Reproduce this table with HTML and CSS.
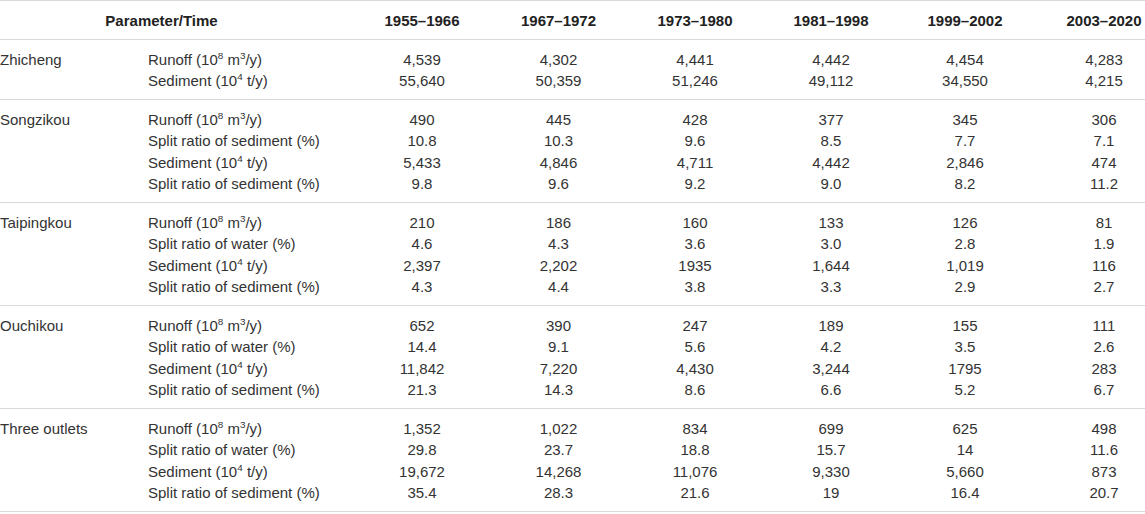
FILE: index.html
```html
<!DOCTYPE html>
<html lang="en">
<head>
    <meta charset="UTF-8">
    <meta name="viewport" content="width=device-width, initial-scale=1.0">
    <title>Runoff and sediment of the three outlets</title>
    <link rel="stylesheet" href="styles.css">
</head>
<body>
    <table class="data-table">
        <colgroup>
            <col class="col-station">
            <col class="col-param">
            <col class="col-a">
            <col class="col-b">
            <col class="col-c">
            <col class="col-d">
            <col class="col-e">
            <col class="col-f">
        </colgroup>
        <thead>
            <tr>
                <th colspan="2" class="param-head">Parameter/Time</th>
                <th>1955–1966</th>
                <th>1967–1972</th>
                <th>1973–1980</th>
                <th>1981–1998</th>
                <th>1999–2002</th>
                <th class="last">2003–2020</th>
            </tr>
        </thead>
        <tbody>
            <tr>
                <td class="station">Zhicheng</td>
                <td class="param">Runoff (10<sup>8</sup> m<sup>3</sup>/y)<br>Sediment (10<sup>4</sup> t/y)</td>
                <td>4,539<br>55,640</td>
                <td>4,302<br>50,359</td>
                <td>4,441<br>51,246</td>
                <td>4,442<br>49,112</td>
                <td>4,454<br>34,550</td>
                <td class="last">4,283<br>4,215</td>
            </tr>
            <tr>
                <td class="station">Songzikou</td>
                <td class="param">Runoff (10<sup>8</sup> m<sup>3</sup>/y)<br>Split ratio of sediment (%)<br>Sediment (10<sup>4</sup> t/y)<br>Split ratio of sediment (%)</td>
                <td>490<br>10.8<br>5,433<br>9.8</td>
                <td>445<br>10.3<br>4,846<br>9.6</td>
                <td>428<br>9.6<br>4,711<br>9.2</td>
                <td>377<br>8.5<br>4,442<br>9.0</td>
                <td>345<br>7.7<br>2,846<br>8.2</td>
                <td class="last">306<br>7.1<br>474<br>11.2</td>
            </tr>
            <tr>
                <td class="station">Taipingkou</td>
                <td class="param">Runoff (10<sup>8</sup> m<sup>3</sup>/y)<br>Split ratio of water (%)<br>Sediment (10<sup>4</sup> t/y)<br>Split ratio of sediment (%)</td>
                <td>210<br>4.6<br>2,397<br>4.3</td>
                <td>186<br>4.3<br>2,202<br>4.4</td>
                <td>160<br>3.6<br>1935<br>3.8</td>
                <td>133<br>3.0<br>1,644<br>3.3</td>
                <td>126<br>2.8<br>1,019<br>2.9</td>
                <td class="last">81<br>1.9<br>116<br>2.7</td>
            </tr>
            <tr>
                <td class="station">Ouchikou</td>
                <td class="param">Runoff (10<sup>8</sup> m<sup>3</sup>/y)<br>Split ratio of water (%)<br>Sediment (10<sup>4</sup> t/y)<br>Split ratio of sediment (%)</td>
                <td>652<br>14.4<br>11,842<br>21.3</td>
                <td>390<br>9.1<br>7,220<br>14.3</td>
                <td>247<br>5.6<br>4,430<br>8.6</td>
                <td>189<br>4.2<br>3,244<br>6.6</td>
                <td>155<br>3.5<br>1795<br>5.2</td>
                <td class="last">111<br>2.6<br>283<br>6.7</td>
            </tr>
            <tr>
                <td class="station">Three outlets</td>
                <td class="param">Runoff (10<sup>8</sup> m<sup>3</sup>/y)<br>Split ratio of water (%)<br>Sediment (10<sup>4</sup> t/y)<br>Split ratio of sediment (%)</td>
                <td>1,352<br>29.8<br>19,672<br>35.4</td>
                <td>1,022<br>23.7<br>14,268<br>28.3</td>
                <td>834<br>18.8<br>11,076<br>21.6</td>
                <td>699<br>15.7<br>9,330<br>19</td>
                <td>625<br>14<br>5,660<br>16.4</td>
                <td class="last">498<br>11.6<br>873<br>20.7</td>
            </tr>
        </tbody>
    </table>
</body>
</html>
```

FILE: styles.css
```css
/* Page reset */
* {
    box-sizing: border-box;
}

body {
    margin: 0;
    background-color: #fff;
    color: #333;
    font-family: 'Liberation Sans', Arial, sans-serif;
    font-size: 15px;
}

/* Table frame */
.data-table {
    width: 1145px;
    table-layout: fixed;
    border-collapse: collapse;
    border-top: 1px solid #d9d9d9;
}

.col-station { width: 148px; }
.col-param { width: 206px; }
.col-a { width: 136px; }
.col-b { width: 137px; }
.col-c { width: 136px; }
.col-d { width: 136px; }
.col-e { width: 132px; }
.col-f { width: 114px; }

.data-table th,
.data-table td {
    padding: 9px 0 7px;
    line-height: 21.5px;
    text-align: center;
    vertical-align: top;
    border-bottom: 1px solid #d9d9d9;
    white-space: nowrap;
}

.data-table th {
    font-weight: bold;
    color: #222;
}

.data-table .param-head {
    padding-right: 31px;
}

.data-table .station,
.data-table .param {
    text-align: left;
}

.data-table .last {
    padding-left: 32px;
}

/* Units like 10^8 m^3 */
sup {
    font-size: 0.66em;
    line-height: 0;
    vertical-align: 0.6em;
}
```
